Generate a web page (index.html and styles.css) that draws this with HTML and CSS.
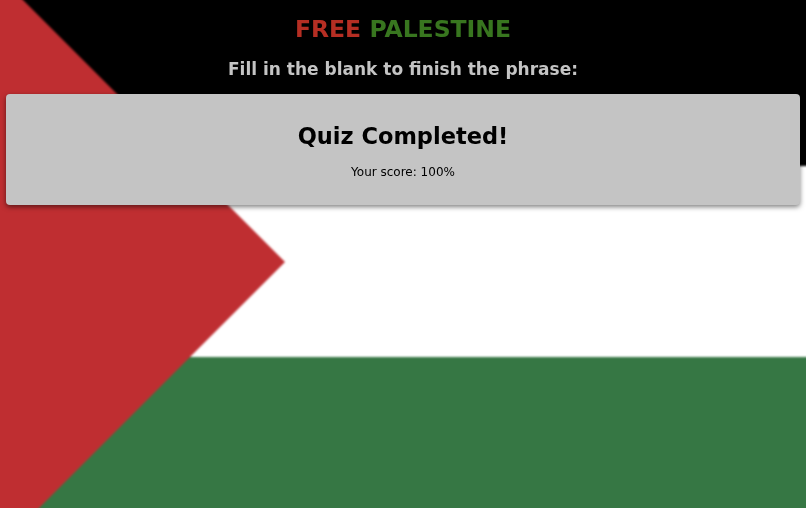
FILE: index.html
```html
<!DOCTYPE html>
<html lang="en">
<head>
<meta charset="utf-8">
<title>Free Palestine</title>
<link rel="stylesheet" href="styles.css">
</head>
<body>
<div class="flag" aria-hidden="true">
  <div class="stripe stripe-black"></div>
  <div class="stripe stripe-white"></div>
  <div class="stripe stripe-green"></div>
  <div class="wedge"></div>
</div>
<main class="page">
  <h1 class="title"><span class="free">FREE</span> <span class="palestine">PALESTINE</span></h1>
  <h2 class="prompt">Fill in the blank to finish the phrase:</h2>
  <section class="card">
    <h3 class="card-title">Quiz Completed!</h3>
    <p class="score">Your score: 100%</p>
  </section>
</main>
</body>
</html>
```
FILE: styles.css
```css
html, body { margin: 0; padding: 0; height: 100%; }
body { font-family: "DejaVu Sans", Verdana, sans-serif; overflow: hidden; background: #000; }
.flag { position: fixed; inset: -6px; overflow: hidden; display: flex; flex-direction: column; filter: blur(1px); }
.stripe-black { height: 172px; background: #000; }
.stripe-white { height: 191px; background: #fff; }
.stripe-green { flex: 1; background: #367744; }
.wedge { position: absolute; left: 0; top: 0; width: 291px; height: 520px; background: #bf2e31;
  clip-path: polygon(0 0, 23px 0, 291px 268px, 39px 520px, 0 520px); }
.page { position: relative; padding: 15px 6px 0; text-align: center; }
.title { margin: 0; font-size: 23.5px; line-height: 28px; font-weight: 700; }
.free { color: #b52e23; }
.palestine { color: #38761f; }
.prompt { margin: 13px 0 0; font-size: 17px; line-height: 26px; font-weight: 700; color: #c4c4c4; }
.card { margin-top: 12px; height: 111px; box-sizing: border-box; padding-top: 27px; background: #c4c4c4; border-radius: 4px; box-shadow: 0 2px 5px rgba(0,0,0,.5); }
.card-title { margin: 0; font-size: 22.5px; line-height: 30px; font-weight: 700; color: #000; }
.score { margin: 13px 0 0; font-size: 12px; line-height: 16px; color: #000; }
```
